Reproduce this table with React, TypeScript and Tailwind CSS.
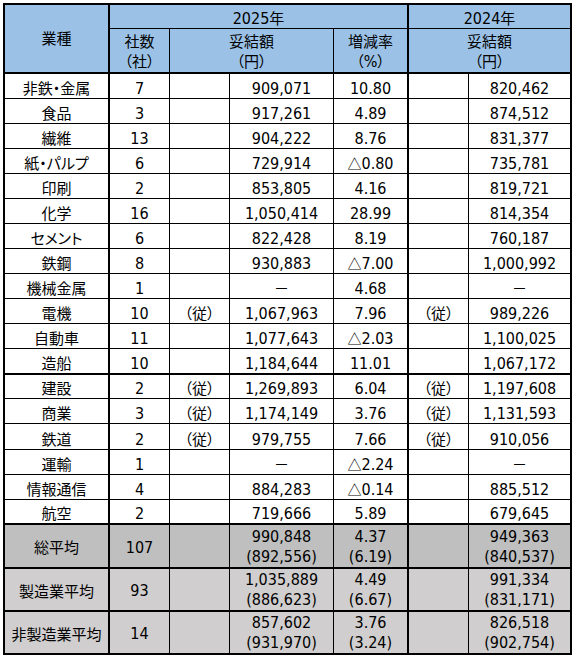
const NUM = "font-['DejaVu_Sans_Condensed','DejaVu_Sans',sans-serif] text-[16px]";
const JP = "font-['Noto_Sans_CJK_JP',sans-serif] text-[15px] [font-feature-settings:'palt']";
const TRI = "font-['Noto_Sans_CJK_JP',sans-serif] text-[14px]";

const rows = [
  ["非鉄・金属", "7", "", "909,071", "10.80", "", "820,462"],
  ["食品", "3", "", "917,261", "4.89", "", "874,512"],
  ["繊維", "13", "", "904,222", "8.76", "", "831,377"],
  ["紙・パルプ", "6", "", "729,914", "△0.80", "", "735,781"],
  ["印刷", "2", "", "853,805", "4.16", "", "819,721"],
  ["化学", "16", "", "1,050,414", "28.99", "", "814,354"],
  ["セメント", "6", "", "822,428", "8.19", "", "760,187"],
  ["鉄鋼", "8", "", "930,883", "△7.00", "", "1,000,992"],
  ["機械金属", "1", "", "－", "4.68", "", "－"],
  ["電機", "10", "（従）", "1,067,963", "7.96", "（従）", "989,226"],
  ["自動車", "11", "", "1,077,643", "△2.03", "", "1,100,025"],
  ["造船", "10", "", "1,184,644", "11.01", "", "1,067,172"],
  ["建設", "2", "（従）", "1,269,893", "6.04", "（従）", "1,197,608"],
  ["商業", "3", "（従）", "1,174,149", "3.76", "（従）", "1,131,593"],
  ["鉄道", "2", "（従）", "979,755", "7.66", "（従）", "910,056"],
  ["運輸", "1", "", "－", "△2.24", "", "－"],
  ["情報通信", "4", "", "884,283", "△0.14", "", "885,512"],
  ["航空", "2", "", "719,666", "5.89", "", "679,645"],
];

// row heights include the bottom border
const rowH = [
  "h-[25px]", "h-[25px]", "h-[25px]", "h-[25px]", "h-[25px]", "h-[25px]",
  "h-[25px]", "h-[25px]", "h-[25px]", "h-[25px]", "h-[25px]", "h-[26px]",
  "h-[24px]", "h-[25px]", "h-[26px]", "h-[25px]", "h-[25px]", "h-[25px]",
];

const colR = ["border-r-2", "border-r", "border-r", "border-r", "border-r-2", "border-r", "border-r-2"];

const summary = [
  { label: "総平均", n: "107", a: ["990,848", "(892,556)"], r: ["4.37", "(6.19)"], b: ["949,363", "(840,537)"], bg: "bg-[#bfbfbf]", h: "h-[44px]" },
  { label: "製造業平均", n: "93", a: ["1,035,889", "(886,623)"], r: ["4.49", "(6.67)"], b: ["991,334", "(831,171)"], bg: "bg-[#d0cece]", h: "h-[43px]" },
  { label: "非製造業平均", n: "14", a: ["857,602", "(931,970)"], r: ["3.76", "(3.24)"], b: ["826,518", "(902,754)"], bg: "bg-[#d0cece]", h: "h-[43px]" },
];

function Val({ v }: { v: string }) {
  if (v.startsWith("△"))
    return (
      <span className={NUM}>
        <span className={TRI}>△</span>
        {v.slice(1)}
      </span>
    );
  if (/^[0-9(.]/.test(v)) return <span className={NUM}>{v}</span>;
  return <span className={JP}>{v}</span>;
}

export default function App() {
  const cell = "p-0 text-center border-black border-b";
  return (
    <div className="min-h-screen bg-white p-[3px] text-black">
      <table
        className={`w-[569px] table-fixed border-separate border-spacing-0 border-t-2 border-l-2 border-black ${NUM}`}
      >
        <colgroup>
          <col className="w-[105px]" />
          <col className="w-[60px]" />
          <col className="w-[60px]" />
          <col className="w-[104px]" />
          <col className="w-[75px]" />
          <col className="w-[60px]" />
          <col className="w-[103px]" />
        </colgroup>
        <thead className="bg-[#9bc2e6]">
          <tr className="h-[24px]">
            <th rowSpan={2} className="p-0 text-center align-middle font-normal border-black border-r-2 border-b-2 leading-[20px]">
              <span className={JP}>業種</span>
            </th>
            <th colSpan={4} className="p-0 text-center align-bottom font-normal border-black border-r-2 border-b leading-[18px]">
              <span className={NUM}>2025</span>
              <span className={JP}>年</span>
            </th>
            <th colSpan={2} className="p-0 text-center align-bottom font-normal border-black border-r-2 border-b leading-[18px]">
              <span className={NUM}>2024</span>
              <span className={JP}>年</span>
            </th>
          </tr>
          <tr className="h-[45px]">
            <th className="p-0 pb-[1px] text-center align-bottom font-normal border-black border-r border-b-2 leading-[19px]">
              <span className={JP}>社数<br />（社）</span>
            </th>
            <th colSpan={2} className="p-0 pb-[1px] text-center align-bottom font-normal border-black border-r border-b-2 leading-[19px]">
              <span className={JP}>妥結額<br />（円）</span>
            </th>
            <th className="p-0 pb-[1px] text-center align-bottom font-normal border-black border-r-2 border-b-2 leading-[19px]">
              <span className={JP}>増減率<br />（<span className={NUM}>%</span>）</span>
            </th>
            <th colSpan={2} className="p-0 pb-[1px] text-center align-bottom font-normal border-black border-r-2 border-b-2 leading-[19px]">
              <span className={JP}>妥結額<br />（円）</span>
            </th>
          </tr>
        </thead>
        <tbody>
          {rows.map((r, i) => (
            <tr key={r[0]} className={rowH[i]}>
              {r.map((v, j) => (
                <td
                  key={j}
                  className={`${cell} ${colR[j]} ${i === 11 || i === 17 ? "border-b-2" : ""} align-bottom leading-[18px]`}
                >
                  {v && <Val v={v} />}
                </td>
              ))}
            </tr>
          ))}
          {summary.map((s) => (
            <tr key={s.label} className={`${s.h} ${s.bg}`}>
              <td className={`${cell} border-r-2 border-b-2 align-middle pt-[3px] leading-[20px]`}>
                <span className={JP}>{s.label}</span>
              </td>
              <td className={`${cell} border-r border-b-2 align-middle pt-[3px] leading-[20px]`}>
                <span className={NUM}>{s.n}</span>
              </td>
              <td className={`${cell} border-r border-b-2`} />
              <td className={`${cell} border-r border-b-2 align-bottom leading-[20px]`}>
                <span className={NUM}>{s.a[0]}<br />{s.a[1]}</span>
              </td>
              <td className={`${cell} border-r-2 border-b-2 align-bottom leading-[20px]`}>
                <span className={NUM}>{s.r[0]}<br />{s.r[1]}</span>
              </td>
              <td className={`${cell} border-r border-b-2`} />
              <td className={`${cell} border-r-2 border-b-2 align-bottom leading-[20px]`}>
                <span className={NUM}>{s.b[0]}<br />{s.b[1]}</span>
              </td>
            </tr>
          ))}
        </tbody>
      </table>
    </div>
  );
}
